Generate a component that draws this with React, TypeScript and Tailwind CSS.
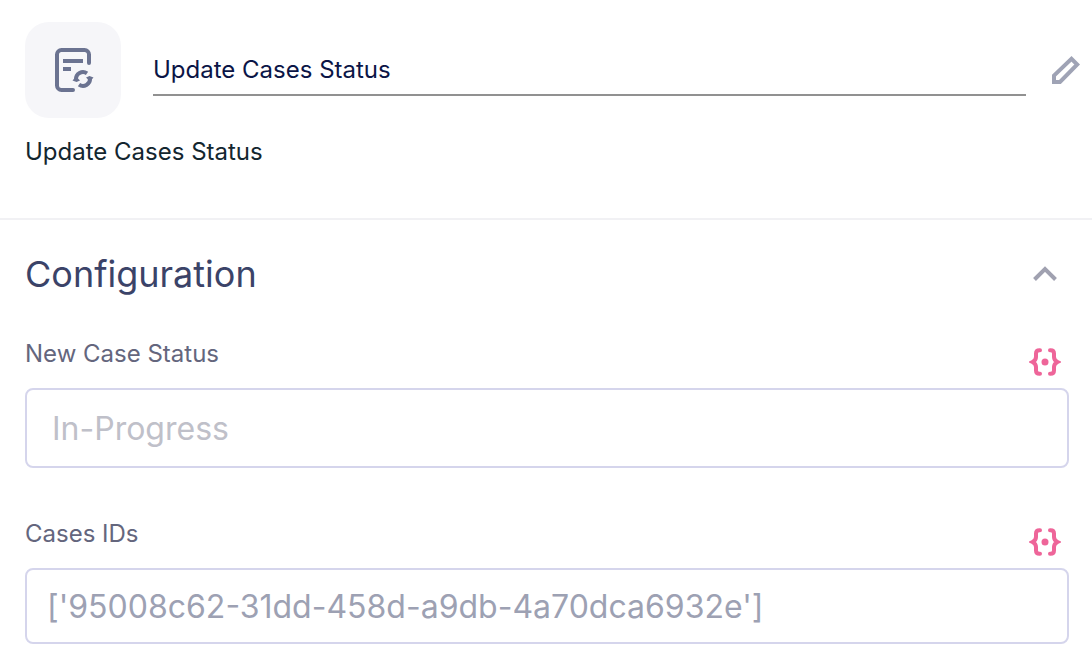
import { useState } from "react";

interface FieldProps {
  id: string;
  label: string;
  children: React.ReactNode;
}

function StepIcon() {
  return (
    <svg width="48" height="48" viewBox="0 0 48 48" fill="none" stroke="#6b7391" aria-hidden="true">
      <path
        d="M24 44H12.5C10 44 8 42 8 39.5V8.5C8 6 10 4 12.5 4H35.5C38 4 40 6 40 8.5V17"
        strokeWidth="4"
        strokeLinecap="round"
      />
      <path d="M14 15H34M14 23H22" strokeWidth="4" />
      <path d="M27 33.5A7 7 0 0 1 38 27.3M41 32.5A7 7 0 0 1 30 38.7" strokeWidth="4" />
      <path d="M23.5 34.5L27 30.5L31 34.5L27.5 36ZM44.5 31.5L41 35.5L37 31.5L40.5 30Z" fill="#6b7391" stroke="none" />
    </svg>
  );
}

function PencilIcon() {
  return (
    <svg width="28" height="28" viewBox="0 0 28 28" fill="none" stroke="#9fa3b5" aria-hidden="true">
      <path d="M2 26V19.5L19.5 2.8L25.2 8.5L8 26Z" strokeWidth="4" />
      <path d="M0 20L8 28H2.5L0 25.5Z" fill="#9fa3b5" stroke="none" />
    </svg>
  );
}

function BracesIcon() {
  return (
    <svg width="32" height="28" viewBox="0 0 32 28" fill="none" stroke="#ee6599" aria-hidden="true">
      <path
        d="M11 2.2H10.5C8 2.2 7 3.5 7 5.5V9C7 11.5 5.5 13 3.5 14C5.5 15 7 16.5 7 19V22.5C7 24.5 8 25.8 10.5 25.8H11"
        strokeWidth="4"
        strokeLinecap="round"
      />
      <path
        d="M21 2.2H21.5C24 2.2 25 3.5 25 5.5V9C25 11.5 26.5 13 28.5 14C26.5 15 25 16.5 25 19V22.5C25 24.5 24 25.8 21.5 25.8H21"
        strokeWidth="4"
        strokeLinecap="round"
      />
      <circle cx="16" cy="14" r="3.5" fill="#ee6599" stroke="none" />
    </svg>
  );
}

function Field({ id, label, children }: FieldProps) {
  return (
    <div>
      <div className="flex items-start justify-between pr-2 pb-3">
        <label htmlFor={id} className="text-2xl leading-8 text-[#64667d]">
          {label}
        </label>
        <button type="button" aria-label={`Insert variable into ${label}`} className="pt-[10px]">
          <BracesIcon />
        </button>
      </div>
      {children}
    </div>
  );
}

export default function App() {
  const [name, setName] = useState("Update Cases Status");
  const [caseIds, setCaseIds] = useState("['95008c62-31dd-458d-a9db-4a70dca6932e']");
  const [open, setOpen] = useState(true);

  return (
    <main className="min-h-screen bg-white font-['Inter',sans-serif]">
      {/* Step header */}
      <header className="border-b-2 border-[#f1f1f4] pt-[22px] pr-3 pb-[50px] pl-[25px]">
        <div className="flex items-center">
          <div className="flex size-24 shrink-0 items-center justify-center rounded-3xl bg-[#f6f6f9]">
            <StepIcon />
          </div>
          <input
            aria-label="Step name"
            value={name}
            onChange={(e) => setName(e.target.value)}
            className="ml-8 h-[52px] min-w-0 flex-1 border-b-2 border-[#919191] text-2xl text-[#0b1546] outline-none"
          />
          <button type="button" aria-label="Edit name" className="ml-[26px] shrink-0">
            <PencilIcon />
          </button>
        </div>
        <p className="mt-[18px] text-2xl leading-8 text-[#13262f]">Update Cases Status</p>
      </header>

      {/* Configuration */}
      <section className="pt-8 pr-[23px] pb-7 pl-[25px]">
        <div className="flex items-center justify-between pr-3">
          <h2 className="text-4xl leading-[44px] text-[#3b4368]">Configuration</h2>
          <button
            type="button"
            aria-label="Toggle configuration"
            aria-expanded={open}
            onClick={() => setOpen(!open)}
          >
            <svg
              width="24"
              height="16"
              viewBox="0 0 24 16"
              fill="none"
              stroke="#a0a1b0"
              strokeWidth="4"
              className={open ? "" : "rotate-180"}
              aria-hidden="true"
            >
              <path d="M1.5 13.5L12 3L22.5 13.5" />
            </svg>
          </button>
        </div>

        {open && (
          <div className="mt-[42px] flex flex-col gap-[50px]">
            <Field id="case-status" label="New Case Status">
              <input
                id="case-status"
                placeholder="In-Progress"
                className="block h-20 w-full rounded-lg border-2 border-[#d5d5ec] px-[25px] text-[32px] outline-none placeholder:text-[#bfc0c9]"
              />
            </Field>
            <Field id="case-ids" label="Cases IDs">
              <input
                id="case-ids"
                value={caseIds}
                onChange={(e) => setCaseIds(e.target.value)}
                className="block h-[76px] w-full rounded-lg border-2 border-[#d5d5ec] px-5 text-[32px] text-[#9da1b3] outline-none"
              />
            </Field>
          </div>
        )}
      </section>
    </main>
  );
}
